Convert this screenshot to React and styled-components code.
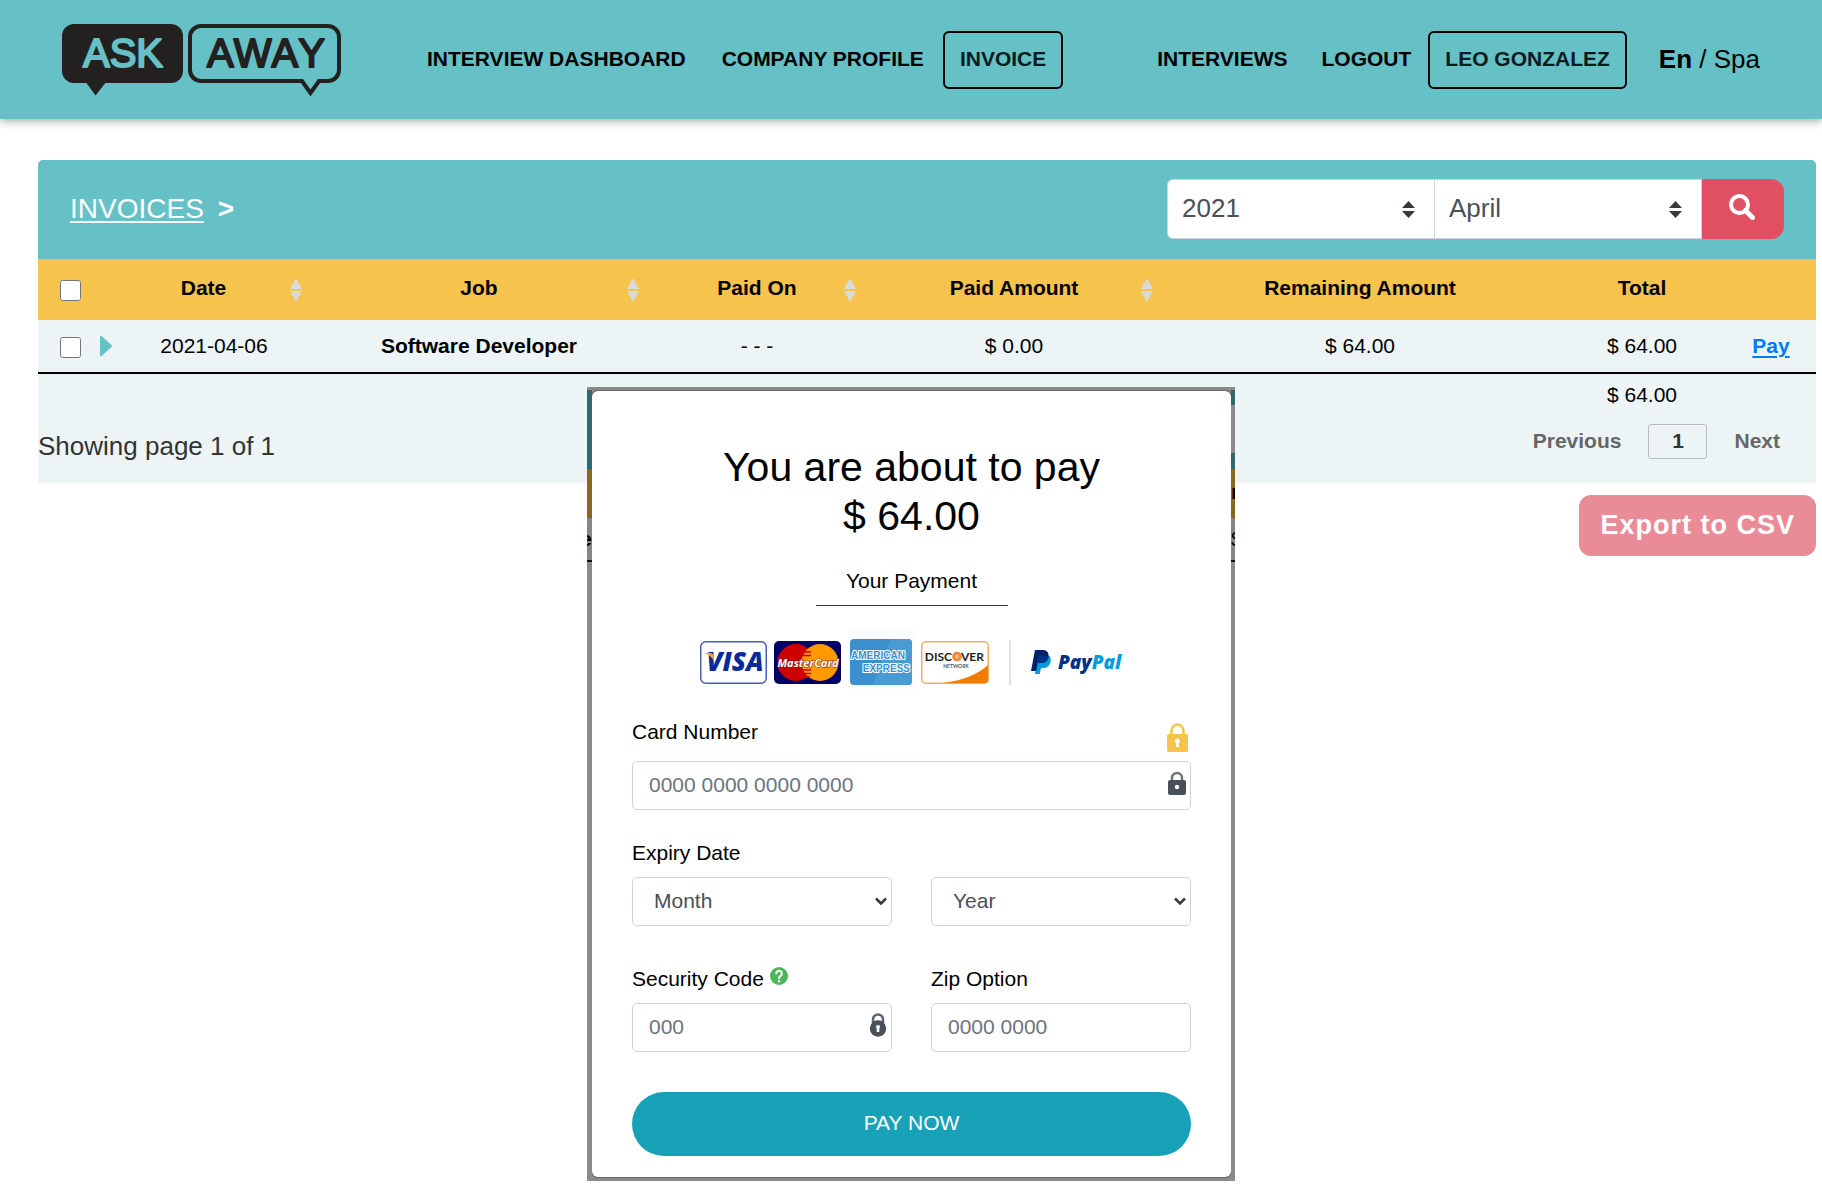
import React, { useState } from "react";
import styled, { createGlobalStyle } from "styled-components";

const teal = "#65c1c6";
const yellow = "#f6c34c";
const paleBlue = "#ecf4f6";

const GlobalStyle = createGlobalStyle`
  *, *::before, *::after {
    box-sizing: border-box;
  }

  body {
    margin: 0;
    background: #fff;
    color: #000;
    font-family: "Liberation Sans", Arial, sans-serif;
    font-size: 21px;
    line-height: 32px;
  }

  button, input, select {
    font: inherit;
  }
`;

const Page = styled.div`
  position: relative;
  min-height: 100vh;
`;

/* ---------- header ---------- */

const Header = styled.header`
  display: flex;
  align-items: center;
  height: 119px;
  padding: 0 62px;
  background: ${teal};
  box-shadow: 0 3px 8px rgba(0, 0, 0, 0.3);
`;

const LogoLink = styled.a`
  display: flex;
  margin: 0 68px 0 0;
`;

const Nav = styled.nav`
  display: flex;
  align-items: center;
  gap: ${({ $right }) => ($right ? 0 : 2)}px;
  margin-left: ${({ $right }) => ($right ? "auto" : 0)};
`;

const NavLink = styled.a`
  padding: 10px 15px 12px;
  border: 2px solid ${({ $boxed }) => ($boxed ? "#000" : "transparent")};
  border-radius: 6px;
  color: ${({ $boxed }) => ($boxed ? "#0a1c1d" : "#000")};
  font-weight: bold;
  text-decoration: none;
  white-space: nowrap;
`;

const Language = styled.div`
  margin-left: 32px;
  padding-bottom: 2px;
  font-size: 26px;
  white-space: nowrap;

  a {
    color: #000;
    text-decoration: none;
  }
`;

/* ---------- invoices ---------- */

const Main = styled.main`
  padding: 41px 6px 0 38px;
`;

const Panel = styled.section`
  background: ${paleBlue};
  border-radius: 5px 5px 0 0;
  overflow: hidden;
`;

const PanelHead = styled.div`
  display: flex;
  align-items: center;
  justify-content: space-between;
  padding: 19px 32px 20px;
  background: ${teal};
`;

const Crumb = styled.h1`
  margin: 0;
  color: #fff;
  font-size: 28px;
  font-weight: normal;

  a {
    margin-right: 14px;
    color: inherit;
    text-underline-offset: 3px;
    text-decoration-thickness: 2px;
  }
`;

const Filters = styled.form`
  display: flex;
  height: 60px;
`;

const FilterBox = styled.div`
  position: relative;
  width: 268px;

  & + & {
    margin-left: -1px;
  }

  select {
    appearance: none;
    width: 100%;
    height: 100%;
    padding: 0 14px 2px;
    border: 1px solid #ced4da;
    border-radius: ${({ $first }) => ($first ? "6px 0 0 6px" : 0)};
    background: #fff;
    color: #495057;
    font-size: 26px;
  }

  svg {
    position: absolute;
    top: 22px;
    right: 20px;
    pointer-events: none;
  }
`;

const SearchButton = styled.button`
  display: flex;
  align-items: center;
  justify-content: center;
  width: 82px;
  padding: 0 2px 4px 0;
  border: 0;
  border-radius: 0 13px 13px 0;
  background: #e04f62;
`;

const Table = styled.table`
  width: 100%;
  table-layout: fixed;
  border-collapse: collapse;
  text-align: center;

  th,
  td {
    padding: 0;
  }

  thead tr {
    height: 61px;
    background: ${yellow};
  }

  tbody tr {
    height: 53px;
    border-bottom: 2px solid #000;
  }

  tfoot tr {
    height: 42px;
  }
`;

const Col = styled.col`
  width: ${({ $w }) => $w}px;
`;

const HeadLabel = styled.div`
  display: flex;
  align-items: center;
  padding: 0 ${({ $end }) => $end || 0}px 4px ${({ $start }) => $start || 0}px;

  span {
    flex: 1;
    padding-right: ${({ $gap }) => $gap || 0}px;
  }

  svg {
    margin-top: 4px;
  }
`;

const RowTools = styled.div`
  display: flex;
  align-items: center;
  gap: 19px;
  padding-left: 22px;
`;

const Check = styled.input`
  width: 21px;
  height: 21px;
  margin: 2px 0 0;
`;

const ExpandButton = styled.button`
  display: flex;
  padding: 0;
  border: 0;
  background: none;
`;

const PayLink = styled.a`
  padding-right: 8px;
  color: #007bff;
  font-weight: bold;
  text-underline-offset: 3px;
`;

const PanelFoot = styled.div`
  display: flex;
  justify-content: space-between;
  padding: 9px 36px 15px 0;
`;

const Status = styled.div`
  color: #333;
  font-size: 26px;
  line-height: 44px;
`;

const Pager = styled.div`
  display: flex;
  align-items: center;
  gap: 27px;
  height: 35px;
`;

const PageButton = styled.button`
  padding: 0 0 1px;
  border: 0;
  background: none;
  color: #666;
  font-weight: bold;
`;

const PageInput = styled.input`
  width: 59px;
  height: 35px;
  padding: 0 0 1px;
  border: 1px solid #bbb;
  border-radius: 3px;
  background: transparent;
  color: #333;
  font-weight: bold;
  text-align: center;
`;

const ExportRow = styled.div`
  display: flex;
  justify-content: flex-end;
  margin-top: 12px;
`;

const ExportButton = styled.button`
  height: 61px;
  padding: 0 21px 2px;
  border: 0;
  border-radius: 12px;
  background: #e98c98;
  color: #fff;
  font-size: 27px;
  font-weight: bold;
  letter-spacing: 1px;
`;

/* ---------- payment dialog ---------- */

const Overlay = styled.div`
  position: absolute;
  top: 387px;
  left: 0;
  right: 0;
  display: flex;
  justify-content: center;
`;

const Frame = styled.div`
  display: flex;
  padding: 3px 0 4px;
  background: #8a8a8a;
`;

const Backdrop = styled.div`
  position: relative;
  width: ${({ $w }) => $w}px;
  overflow: hidden;
  background: ${({ $bands }) => $bands};
  color: #000;
`;

const Peek = styled.span`
  position: absolute;
  top: ${({ $top }) => $top}px;
  ${({ $side }) => $side}: 0;
  font-weight: ${({ $bold }) => ($bold ? "bold" : "normal")};
`;

const Dialog = styled.div`
  width: 639px;
  padding: 52px 40px 21px;
  margin: 1px 0 0;
  border-radius: 6px;
  background: #fff;
  box-shadow: 0 0 1px 1px rgba(0, 0, 0, 0.25);
`;

const DialogTitle = styled.h2`
  margin: 0;
  font-size: 41px;
  font-weight: normal;
  line-height: 49px;
  text-align: center;
`;

const PaymentHeading = styled.h3`
  width: 192px;
  margin: 24px auto 0;
  padding-bottom: 8px;
  border-bottom: 1px solid #343a40;
  font-size: 21px;
  font-weight: normal;
  text-align: center;
`;

const Brands = styled.div`
  display: flex;
  align-items: center;
  justify-content: center;
  gap: 7px;
  margin: 23px 0 21px;
`;

const BrandDivider = styled.span`
  width: 2px;
  height: 45px;
  margin: 0 13px;
  background: #dfe2e6;
`;

const LabelRow = styled.div`
  display: flex;
  gap: 6px;
  justify-content: ${({ $spread }) => ($spread ? "space-between" : "flex-start")};
  height: ${({ $spread }) => ($spread ? 45 : 40)}px;

  svg {
    margin: ${({ $spread }) => ($spread ? "7px 3px 0 0" : "4px 0 0")};
  }
`;

const Fields = styled.div`
  display: grid;
  grid-template-columns: 1fr 1fr;
  column-gap: 39px;
  margin-top: ${({ $gap }) => $gap}px;
`;

const Control = styled.div`
  position: relative;

  input,
  select {
    appearance: none;
    display: block;
    width: 100%;
    height: 49px;
    padding: 0 16px 2px;
    border: 1px solid #ced4da;
    border-radius: 5px;
    background: #fff;
    color: #495057;
  }

  select {
    padding: 0 21px 2px;
  }

  input::placeholder {
    color: #6c757d;
    opacity: 1;
  }

  svg {
    position: absolute;
    top: 10px;
    right: 5px;
    pointer-events: none;
  }
`;

const PayButton = styled.button`
  display: block;
  width: 100%;
  height: 64px;
  margin-top: 40px;
  padding: 0 0 2px;
  border: 0;
  border-radius: 32px;
  background: #18a2b8;
  color: #fff;
`;

/* ---------- drawings ---------- */

const LogoText = styled.text`
  font-family: "Liberation Sans", Arial, sans-serif;
  font-size: 40px;
  font-kerning: none;
  text-anchor: middle;
  stroke-width: 2px;
  stroke-linejoin: round;
`;

const Logo = () => (
  <svg width="280" height="72" viewBox="0 0 280 72">
    <rect width="121" height="59" rx="12" fill="#222120" />
    <path d="M23 57h22L33.500 71.500z" fill="#222120" />
    <path
      d="M140 2h126a11 11 0 0 1 11 11v33a11 11 0 0 1-11 11h-9l-8.500 12-8.500-12h-101a11 11 0 0 1-11-11V13a11 11 0 0 1 11-11z"
      fill="none"
      stroke="#222120"
      strokeWidth="4"
    />
    <LogoText x="61" y="43" fill={teal} stroke={teal}>
      ASK
    </LogoText>
    <LogoText x="204" y="43" fill="#222120" stroke="#222120">
      AWAY
    </LogoText>
  </svg>
);

const SortIcon = () => (
  <svg width="12" height="24" viewBox="0 0 12 24" fill="#dadada">
    <path d="M6 0l6 11H0zM6 24l6-11H0z" />
  </svg>
);

const UpDownIcon = () => (
  <svg width="13" height="17" viewBox="0 0 13 17" fill="#343a40">
    <path d="M6.500 0L13 7H0zM6.500 17L13 10H0z" />
  </svg>
);

const SearchIcon = () => (
  <svg width="26" height="26" viewBox="0 0 26 26" fill="none" stroke="#fff" strokeWidth="4">
    <circle cx="10.500" cy="10.500" r="8.500" />
    <path d="M16.500 16.500l7 7" strokeWidth="5" strokeLinecap="round" />
  </svg>
);

const ExpandIcon = () => (
  <svg width="13" height="22" viewBox="0 0 13 22">
    <path d="M0 1.500Q0 0 1.500 1L11.500 10Q13 11 11.500 12L1.500 21Q0 22 0 20.500z" fill={teal} />
  </svg>
);

const ChevronIcon = () => (
  <svg width="12" height="28" viewBox="0 0 12 28" fill="none" stroke="#343a40" strokeWidth="2.500">
    <path d="M1 11.500l5 5 5-5" />
  </svg>
);

const GoldLock = () => (
  <svg width="21" height="29" viewBox="0 0 21 29">
    <path d="M4.500 12V8a6 6.500 0 0 1 12 0v4" fill="none" stroke={yellow} strokeWidth="2.500" />
    <rect y="11" width="21" height="18" rx="2" fill={yellow} />
    <circle cx="10.500" cy="18" r="2.500" fill="#fff" />
    <path d="M9.500 18h2l.5 6H9z" fill="#fff" />
  </svg>
);

const DarkLock = () => (
  <svg width="18" height="24" viewBox="0 0 18 24">
    <path d="M4 10V7a5 5 0 0 1 10 0v3" fill="none" stroke="#6c757d" strokeWidth="2.500" />
    <rect y="9" width="18" height="15" rx="2" fill="#495057" />
    <circle cx="9" cy="16" r="2.200" fill="#fff" />
  </svg>
);

const RoundLock = () => (
  <svg width="18" height="24" viewBox="0 0 18 24">
    <path d="M4 10V6.500a5 5 0 0 1 10 0V10" fill="none" stroke="#5c646b" strokeWidth="2.500" />
    <circle cx="9" cy="15.500" r="8.200" fill="#495057" />
    <circle cx="9" cy="14" r="2" fill="#fff" />
    <path d="M8 14h2l.4 5H7.600z" fill="#fff" />
  </svg>
);

const HelpIcon = () => (
  <svg width="18" height="18" viewBox="0 0 18 18">
    <circle cx="9" cy="9" r="9" fill="#4cb65a" />
    <path
      d="M6.200 6.600a2.800 2.800 0 1 1 4.300 2.400Q9 9.800 9 11.300"
      fill="none"
      stroke="#fff"
      strokeWidth="2"
      strokeLinecap="round"
    />
    <circle cx="9" cy="14.300" r="1.200" fill="#fff" />
  </svg>
);

const brandFont = "Open Sans, sans-serif";

const Visa = () => (
  <svg width="67" height="43" viewBox="0 0 67 43">
    <rect x=".75" y=".75" width="65.500" height="41.500" rx="5" fill="#fff" stroke="#4a5dbb" strokeWidth="1.500" />
    <text x="35" y="30" textAnchor="middle" fontFamily={brandFont} fontSize="26" fontWeight="800" fontStyle="italic" fill="#0a2a9c">
      VISA
    </text>
    <path d="M4 12h6q3 0 3.500 3l1 6Q11 14 4 12z" fill="#f9a51a" />
  </svg>
);

const MasterCard = () => (
  <svg width="67" height="43" viewBox="0 0 67 43">
    <rect width="67" height="43" rx="5" fill="#000066" />
    <circle cx="22" cy="21.500" r="18.500" fill="#cc0000" />
    <circle cx="46" cy="21.500" r="18.500" fill="#ff9900" />
    <path d="M30 11h7M29 14.500h8M29 29h8M30 32.500h7M32 36h4" stroke="#cc0000" strokeWidth="1.500" />
    <text x="34" y="26" textAnchor="middle" fontFamily={brandFont} fontSize="11" fontWeight="bold" fontStyle="italic" fill="#fff" stroke="#7a1a20" strokeWidth="1" paintOrder="stroke">
      MasterCard
    </text>
  </svg>
);

const Amex = () => (
  <svg width="66" height="66" viewBox="0 0 66 66">
    <rect width="66" height="66" fill="#fcfcfc" />
    <rect x="2" y="10" width="62" height="46" rx="4" fill="#3b8fcd" />
    <path d="M43 10h17a4 4 0 0 1 4 4v38a4 4 0 0 1-4 4H25z" fill="#4a9bd4" />
    <g fontFamily="Liberation Sans, Arial, sans-serif" fontSize="10" fontWeight="bold" fill="#3b8fcd" stroke="#fff" strokeWidth="2" paintOrder="stroke">
      <text x="3" y="30">
        AMERICAN
      </text>
      <text x="62" y="43" textAnchor="end">
        EXPRESS
      </text>
    </g>
  </svg>
);

const Discover = () => (
  <svg width="68" height="43" viewBox="0 0 68 43">
    <rect x=".75" y=".75" width="66.500" height="41.500" rx="4" fill="#fff" stroke="#f3ac62" strokeWidth="1.500" />
    <path d="M22 42q30-4 45-18v15q0 3-3 3z" fill="#f07d00" />
    <g fontFamily="Lato, sans-serif" fontWeight="bold" fill="#1d1d1b">
      <text x="31" y="20" fontSize="12" textAnchor="end">
        DISC
      </text>
      <text x="40" y="20" fontSize="12">
        VER
      </text>
      <text x="35" y="27" fontSize="5" textAnchor="middle" fill="#555">
        NETWORK
      </text>
    </g>
    <circle cx="36" cy="15.500" r="4.800" fill="#f0883a" />
    <circle cx="36" cy="15.500" r="2" fill="#f9bd8a" />
  </svg>
);

const PayPal = () => (
  <svg width="92" height="30" viewBox="0 0 92 30">
    <path d="M7 8h9q5 1 3.500 7-1.500 6-7.500 6h-2l-1.300 6H4z" fill="#009cde" />
    <path d="M4 3h8.500q6 1 5 7-1 6-8 6H6.800L5 24H0z" fill="#012169" />
    <path d="M7 9h8q2.500 0 2.500 1-1 6-8 6H5.800z" fill="#003087" />
    <text x="27" y="22" fontFamily={brandFont} fontSize="19" fontWeight="800" fontStyle="italic" fill="#003087">
      Pay
      <tspan fill="#009cde">Pal</tspan>
    </text>
  </svg>
);

/* ---------- app ---------- */

const columns = [
  { title: "Date", sortable: true, gap: 9 },
  { title: "Job", sortable: true, start: 29, end: 17 },
  { title: "Paid On", sortable: true, start: 14, end: 2 },
  { title: "Paid Amount", sortable: true, start: 29, end: 17 },
  { title: "Remaining Amount" },
  { title: "Total" },
];

const colWidths = [88, 176, 354, 202, 312, 380, 184, 82];

// page bands seen on each side of the dialog
const leftBands =
  "linear-gradient(#30696c 79px, #886820 79px 128px, #838788 128px 170px, #111 170px 172px, #8a8a8a 172px)";
const rightBands =
  "linear-gradient(#30696c 15px, #8a8a8a 15px 63px, #30696c 63px 79px, #886820 79px 128px, #838788 128px 170px, #111 170px 172px, #8a8a8a 172px)";

function PaymentDialog() {
  return (
    <Overlay>
      <Frame>
        <Backdrop $w={5} $bands={leftBands} aria-hidden="true">
          <Peek $top={133} $side="right" $bold>
            e
          </Peek>
        </Backdrop>
        <Dialog role="dialog" aria-labelledby="pay-title">
          <DialogTitle id="pay-title">
            You are about to pay
            <br />$ 64.00
          </DialogTitle>
          <PaymentHeading>Your Payment</PaymentHeading>
          <Brands>
            <Visa />
            <MasterCard />
            <Amex />
            <Discover />
            <BrandDivider />
            <PayPal />
          </Brands>
          <form onSubmit={(ev) => ev.preventDefault()}>
            <LabelRow $spread>
              <label htmlFor="card">Card Number</label>
              <GoldLock />
            </LabelRow>
            <Control>
              <input id="card" placeholder="0000 0000 0000 0000" />
              <DarkLock />
            </Control>
            <Fields $gap={27}>
              <div>
                <LabelRow>
                  <label htmlFor="month">Expiry Date</label>
                </LabelRow>
                <Control>
                  <select id="month">
                    <option>Month</option>
                  </select>
                  <ChevronIcon />
                </Control>
              </div>
              <div>
                <LabelRow />
                <Control>
                  <select aria-label="Year">
                    <option>Year</option>
                  </select>
                  <ChevronIcon />
                </Control>
              </div>
            </Fields>
            <Fields $gap={37}>
              <div>
                <LabelRow>
                  <label htmlFor="code">Security Code</label>
                  <HelpIcon />
                </LabelRow>
                <Control>
                  <input id="code" placeholder="000" />
                  <RoundLock />
                </Control>
              </div>
              <div>
                <LabelRow>
                  <label htmlFor="zip">Zip Option</label>
                </LabelRow>
                <Control>
                  <input id="zip" placeholder="0000 0000" />
                </Control>
              </div>
            </Fields>
            <PayButton type="submit">PAY NOW</PayButton>
          </form>
        </Dialog>
        <Backdrop $w={4} $bands={rightBands} aria-hidden="true">
          <Peek $top={86} $side="left" $bold>
            r
          </Peek>
          <Peek $top={133} $side="left">
            $
          </Peek>
        </Backdrop>
      </Frame>
    </Overlay>
  );
}

export default function App() {
  const [page, setPage] = useState("1");

  return (
    <Page>
      <GlobalStyle />
      <Header>
        <LogoLink href="#home" aria-label="Ask Away">
          <Logo />
        </LogoLink>
        <Nav>
          <NavLink href="#dashboard">INTERVIEW DASHBOARD</NavLink>
          <NavLink href="#profile">COMPANY PROFILE</NavLink>
          <NavLink href="#invoice" $boxed>
            INVOICE
          </NavLink>
        </Nav>
        <Nav $right>
          <NavLink href="#interviews">INTERVIEWS</NavLink>
          <NavLink href="#logout">LOGOUT</NavLink>
          <NavLink href="#account" $boxed>
            LEO GONZALEZ
          </NavLink>
          <Language>
            <a href="#en">
              <b>En</b>
            </a>{" "}
            / <a href="#spa">Spa</a>
          </Language>
        </Nav>
      </Header>

      <Main>
        <Panel>
          <PanelHead>
            <Crumb>
              <a href="#invoices">INVOICES</a>
              <b>&gt;</b>
            </Crumb>
            <Filters onSubmit={(ev) => ev.preventDefault()}>
              <FilterBox $first>
                <select aria-label="Year">
                  <option>2021</option>
                </select>
                <UpDownIcon />
              </FilterBox>
              <FilterBox>
                <select aria-label="Month">
                  <option>April</option>
                </select>
                <UpDownIcon />
              </FilterBox>
              <SearchButton type="submit" aria-label="Search">
                <SearchIcon />
              </SearchButton>
            </Filters>
          </PanelHead>

          <Table>
            <colgroup>
              {colWidths.map((w, i) => (
                <Col key={i} $w={w} />
              ))}
            </colgroup>
            <thead>
              <tr>
                <th>
                  <RowTools>
                    <Check type="checkbox" aria-label="Select all" />
                  </RowTools>
                </th>
                {columns.map(({ title, sortable, start, end, gap }) => (
                  <th key={title}>
                    <HeadLabel $start={start} $end={end} $gap={gap}>
                      <span>{title}</span>
                      {sortable && <SortIcon />}
                    </HeadLabel>
                  </th>
                ))}
                <th />
              </tr>
            </thead>
            <tbody>
              <tr>
                <td>
                  <RowTools>
                    <Check type="checkbox" aria-label="Select invoice" />
                    <ExpandButton aria-label="Expand">
                      <ExpandIcon />
                    </ExpandButton>
                  </RowTools>
                </td>
                <td>2021-04-06</td>
                <td>
                  <b>Software Developer</b>
                </td>
                <td>- - -</td>
                <td>$ 0.00</td>
                <td>$ 64.00</td>
                <td>$ 64.00</td>
                <td>
                  <PayLink href="#pay">Pay</PayLink>
                </td>
              </tr>
            </tbody>
            <tfoot>
              <tr>
                <td colSpan={6} />
                <td>$ 64.00</td>
                <td />
              </tr>
            </tfoot>
          </Table>

          <PanelFoot>
            <Status>Showing page 1 of 1</Status>
            <Pager>
              <PageButton>Previous</PageButton>
              <PageInput aria-label="Page" value={page} onChange={(ev) => setPage(ev.target.value)} />
              <PageButton>Next</PageButton>
            </Pager>
          </PanelFoot>
        </Panel>
        <ExportRow>
          <ExportButton>Export to CSV</ExportButton>
        </ExportRow>
      </Main>

      <PaymentDialog />
    </Page>
  );
}
